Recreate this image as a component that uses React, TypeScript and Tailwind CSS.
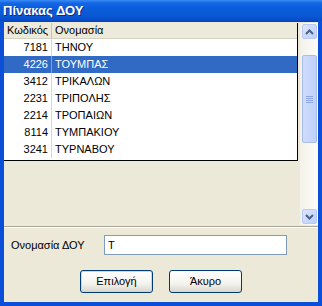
import React from "react";

const rows = [
  { code: "7181", name: "ΤΗΝΟΥ" },
  { code: "4226", name: "ΤΟΥΜΠΑΣ", selected: true },
  { code: "3412", name: "ΤΡΙΚΑΛΩΝ" },
  { code: "2231", name: "ΤΡΙΠΟΛΗΣ" },
  { code: "2214", name: "ΤΡΟΠΑΙΩΝ" },
  { code: "8114", name: "ΤΥΜΠΑΚΙΟΥ" },
  { code: "3241", name: "ΤΥΡΝΑΒΟΥ" },
];

function Arrow({ up }: { up?: boolean }) {
  return (
    <svg width="9" height="6" viewBox="0 0 9 6">
      <path
        d={up ? "M1 5 L4.5 1.5 L8 5" : "M1 1 L4.5 4.5 L8 1"}
        fill="none"
        stroke="#4d6185"
        strokeWidth="2"
      />
    </svg>
  );
}

export default function App() {
  return (
    <div
      className="w-[322px] h-[306px] flex flex-col bg-[#0b4fd9] text-[11px] text-black overflow-hidden"
      style={{ fontFamily: '"Liberation Sans", Arial, sans-serif' }}
    >
      <div className="h-[21px] shrink-0 flex items-center pl-[3px] bg-[linear-gradient(#3b8cf3_0px,#1466e6_3px,#0a5ddb_8px,#0a58d4_16px,#0848c4_21px)]">
        <span className="text-white font-bold text-[13px] leading-none [text-shadow:1px_1px_0_#0a2a8a]">
          Πίνακας ΔΟΥ
        </span>
      </div>
      <div className="flex-1 mx-[4px] mb-[4px] bg-[#ece9d8] flex flex-col border-t border-[#0840c0]">
        <div className="h-[205px] flex pt-[1px] border-b border-[#aca899] shrink-0">
          <div className="w-[294px] h-[138px] bg-white border-r border-b border-black flex flex-col">
            <div className="h-[16px] flex bg-[#ebeadb] border-b border-[#d6d2c2]">
              <div className="w-[48px] pl-[3px] flex items-center border-r border-[#c7c5b2]">
                Κωδικός
              </div>
              <div className="flex-1 pl-[3px] flex items-center">Ονομασία</div>
            </div>
            {rows.map((r) => (
              <div
                key={r.code}
                className={
                  "h-[17px] flex " +
                  (r.selected ? "bg-[#316ac5] text-white" : "")
                }
              >
                <div
                  className={
                    "w-[48px] pr-[3px] flex items-center justify-end border-r " +
                    (r.selected ? "border-[#7fa0dc]" : "border-[#d8d8d8]")
                  }
                >
                  {r.code}
                </div>
                <div className="flex-1 pl-[3px] flex items-center">{r.name}</div>
              </div>
            ))}
          </div>
          <div className="w-[18px] ml-[2px] h-[202px] bg-[linear-gradient(90deg,#f3f1e8,#fdfdfa)] flex flex-col items-center">
            <div className="w-[15px] h-[15px] mt-[1px] rounded-[2px] border border-[#b9cbf3] bg-[linear-gradient(135deg,#dbe6fd,#bccffb)] flex items-center justify-center">
              <Arrow up />
            </div>
            <div className="h-[16px]" />
            <div className="w-[15px] h-[88px] rounded-[2px] border border-[#a9bdeb] bg-[linear-gradient(90deg,#cfdcfc,#bfd0fa)] flex flex-col items-center justify-center gap-[1px]">
              <div className="w-[7px] h-[1px] bg-[#8fa7e0]" />
              <div className="w-[7px] h-[1px] bg-[#8fa7e0]" />
              <div className="w-[7px] h-[1px] bg-[#8fa7e0]" />
              <div className="w-[7px] h-[1px] bg-[#8fa7e0]" />
            </div>
            <div className="flex-1" />
            <div className="w-[15px] h-[15px] mb-[1px] rounded-[2px] border border-[#b9cbf3] bg-[linear-gradient(135deg,#dbe6fd,#bccffb)] flex items-center justify-center">
              <Arrow />
            </div>
          </div>
        </div>
        <div className="border-t border-white" />
        <div className="flex items-center mt-[7px] h-[20px]">
          <div className="w-[100px] pl-[7px]">Ονομασία ΔΟΥ</div>
          <div className="w-[183px] h-[20px] bg-white border border-[#7f9db9] flex items-center pl-[3px]">
            T
          </div>
        </div>
        <div className="flex justify-center gap-[16px] mt-[15px]">
          <button className="w-[73px] h-[23px] rounded-[3px] border border-[#003c74] bg-[linear-gradient(#ffffff,#f4f3ee_60%,#d9d6cc)] shadow-[inset_0_0_0_1px_#c4d6f5] text-[11px]">
            Επιλογή
          </button>
          <button className="w-[73px] h-[23px] rounded-[3px] border border-[#003c74] bg-[linear-gradient(#ffffff,#f4f3ee_60%,#d9d6cc)] text-[11px]">
            Άκυρο
          </button>
        </div>
      </div>
    </div>
  );
}
